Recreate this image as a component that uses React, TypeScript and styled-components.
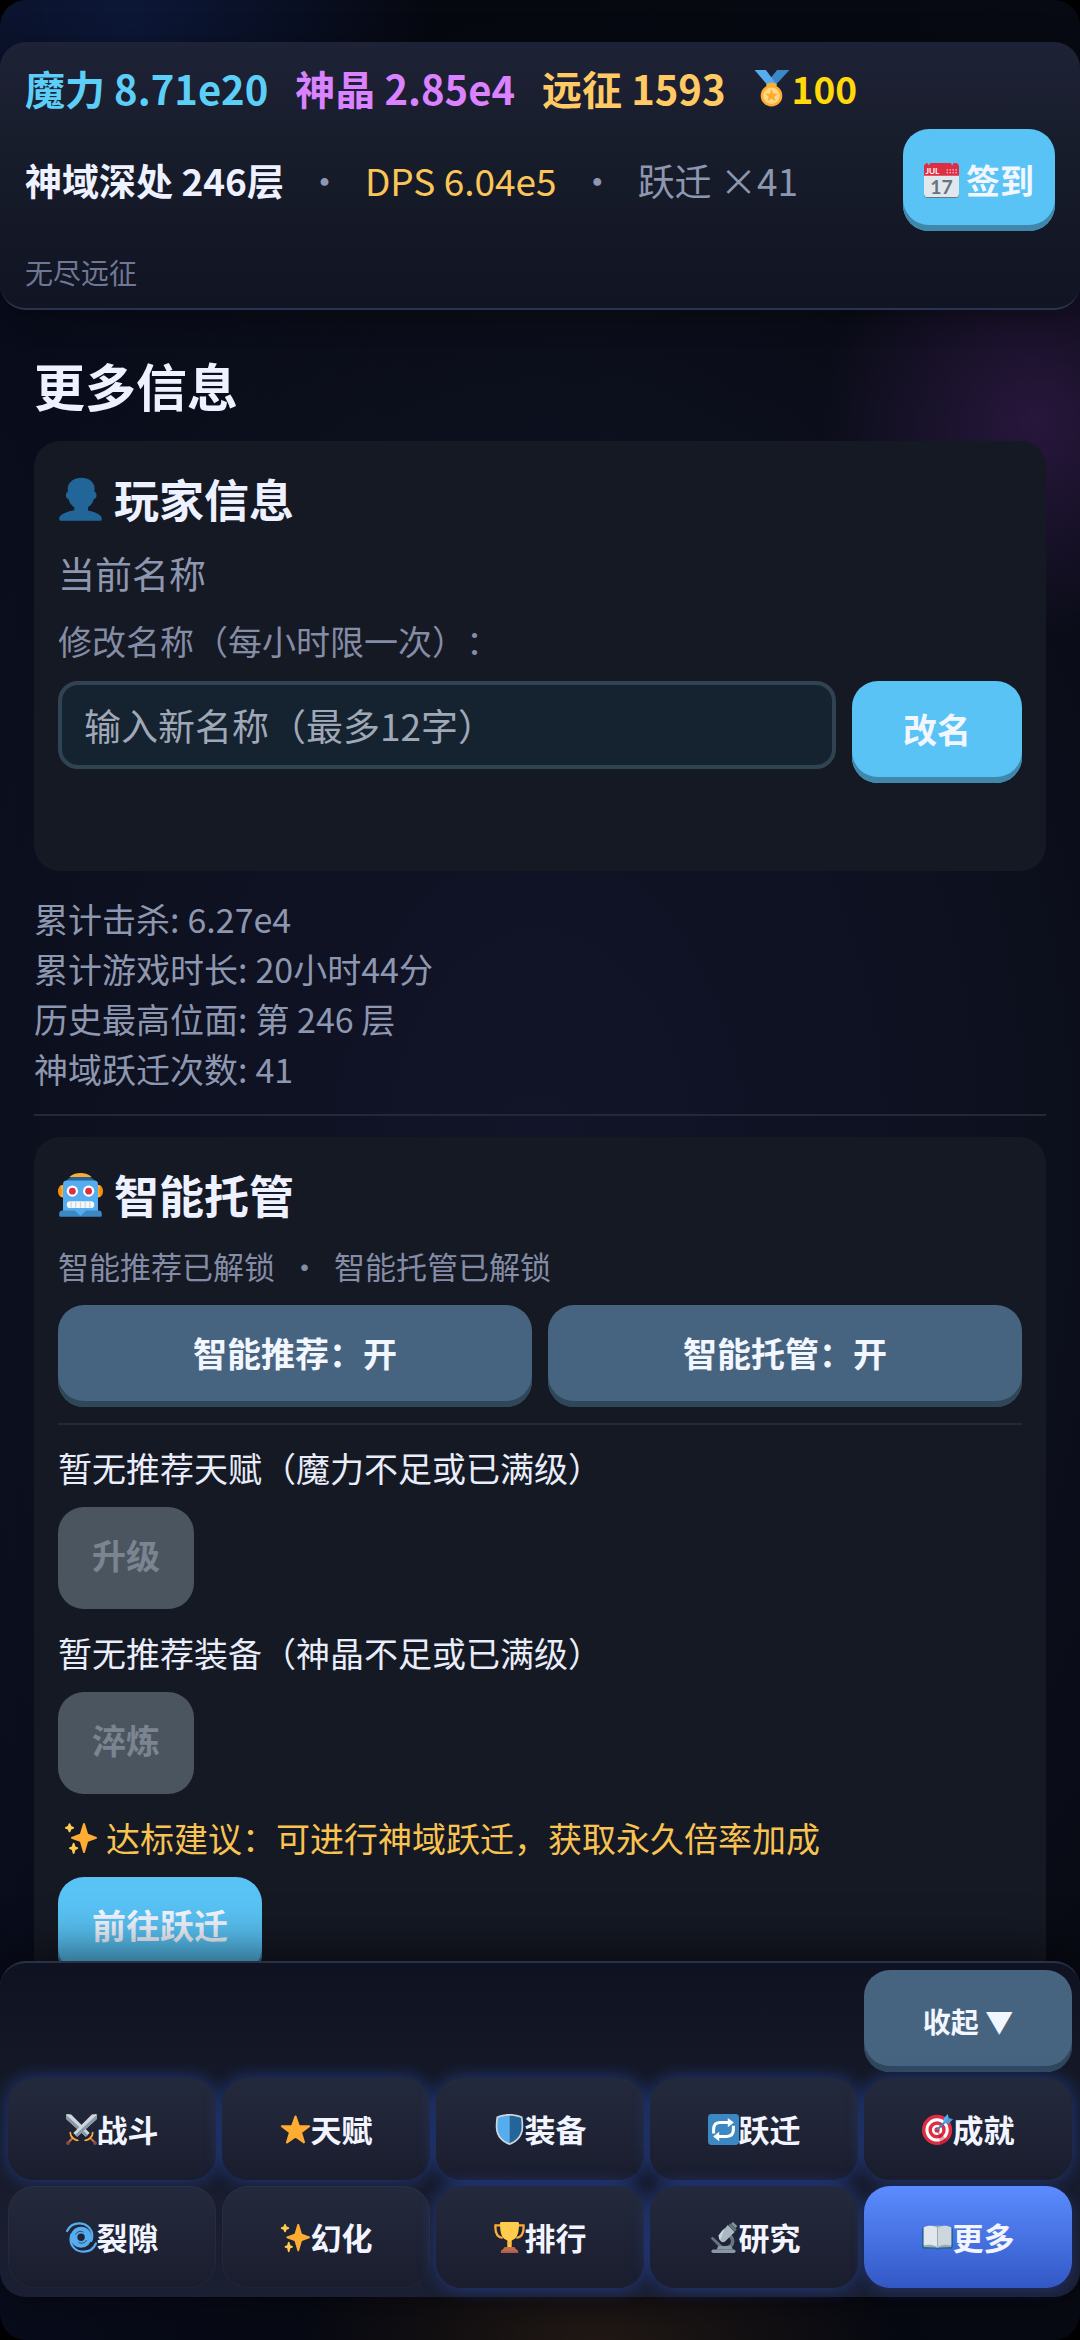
import React from "react";
import styled, { createGlobalStyle, css } from "styled-components";

const GlobalStyle = createGlobalStyle`
  * { box-sizing: border-box; }
  html { background: #000; }
  body {
    margin: 0;
    font-family: "Noto Sans CJK SC", "Noto Sans", sans-serif;
    text-spacing-trim: space-all;
    color: #eef1ff;
  }
  h1, h2, p, ul, dl, dd { margin: 0; padding: 0; }
  button, input { font-family: inherit; }
`;

/* ---------- icons ---------- */

const Svg = styled.svg<{ $size: number }>`
  width: ${(p) => p.$size}px;
  height: ${(p) => p.$size}px;
  flex: none;
  display: block;
`;

type IconProps = { size: number };

const Icon = ({ size, children }: IconProps & { children: React.ReactNode }) => (
  <Svg $size={size} viewBox="0 0 36 36" aria-hidden="true">
    {children}
  </Svg>
);

const MedalIcon = ({ size }: IconProps) => (
  <Icon size={size}>
    <path fill="#3B88C3" d="M23.5 0h12L22 14.6l-7.200-4z" />
    <path fill="#55ACEE" d="M1.500 0h11l11 14.600H14z" />
    <path fill="#FFAC33" d="M13 13.500q5-2 10 0v3H13z" />
    <circle cx="18" cy="25" r="10.500" fill="#FFAC33" />
    <circle cx="18" cy="25" r="8" fill="#FFD983" />
    <path
      fill="#FFAC33"
      d="M18 18.600l1.700 4.200 4.500.300-3.500 2.900 1.200 4.400-3.900-2.500-3.900 2.500 1.200-4.400-3.500-2.900 4.500-.300z"
    />
  </Icon>
);

const CalendarIcon = ({ size }: IconProps) => (
  <Icon size={size}>
    <path fill="#66757F" d="M0 31.500h36v.500a4 4 0 0 1-4 4H4a4 4 0 0 1-4-4z" />
    <path fill="#E1E8ED" d="M0 11h36v20a4 4 0 0 1-4 4H4a4 4 0 0 1-4-4z" />
    <path
      fill="#DD2E44"
      d="M0 13V4a4 4 0 0 1 3.500-4L5 2.500 6.500 0h21L29 2.500 30.500 0 32 0a4 4 0 0 1 4 4v9z"
    />
    <g fill="#F4ABBA">
      {[24, 27, 30, 33].map((x) =>
        [7, 9.8].map((y) => <circle key={`${x}-${y}`} cx={x} cy={y} r=".9" />)
      )}
    </g>
    <text x="1.500" y="11.300" fontSize="8.500" fontWeight="700" fill="#fff" fontFamily="Lato, sans-serif">
      JUL
    </text>
    <text x="18" y="31.500" fontSize="20" fontWeight="700" textAnchor="middle" fill="#66757F" fontFamily="Lato, sans-serif">
      17
    </text>
  </Icon>
);

const UserIcon = ({ size }: IconProps) => (
  <Icon size={size}>
    <path
      fill="#269"
      d="M24 26.799v-2.566c2-1.348 4.080-3.779 4.703-6.896.186.103.206.170.413.170.991 0 1.709-1.287 1.709-2.873 0-1.562-.823-2.827-1.794-2.865.187-.674.293-1.577.293-2.735C29.324 5.168 26 .527 18.541.527c-6.629 0-10.777 4.641-10.777 8.507 0 1.123.069 2.043.188 2.755-.911.137-1.629 1.352-1.629 2.845 0 1.587.804 2.873 1.796 2.873.206 0 .025-.067.209-.170C8.952 20.453 11 22.885 13 24.232v2.414c-5 .645-12 3.437-12 6.230v1.061C1 35 2.076 35 3.137 35h29.725C33.924 35 35 35 35 33.938v-1.061c0-2.615-6-5.225-11-6.078z"
    />
  </Icon>
);

const RobotIcon = ({ size }: IconProps) => (
  <Icon size={size}>
    <ellipse cx="3.500" cy="14.500" rx="3.500" ry="5" fill="#F4900C" />
    <ellipse cx="32.500" cy="14.500" rx="3.500" ry="5" fill="#F4900C" />
    <path fill="#FFAC33" d="M2 10q2 4.500 0 9l3 .500v-10zM34 10q-2 4.500 0 9l-3 .500v-10z" />
    <path fill="#269" d="M5 8C9 2.500 13 2 18 2s9 .500 13 6z" />
    <path fill="#FFAC33" d="M9 3.200C12 .400 15 0 18 0s6 .400 9 3.200z" />
    <path fill="#55ACEE" d="M4 9q0-3 3-3h22q3 0 3 3v23H4z" />
    <path fill="#3B88C3" d="M1 32.500Q1 30 3.500 30h29q2.500 0 2.500 2.500V34q0 1-1 1H2q-1 0-1-1z" />
    <path fill="#55ACEE" d="M13 29.500h10l-5 4.800z" />
    <circle cx="11.500" cy="14.500" r="4.500" fill="#fff" />
    <circle cx="24.500" cy="14.500" r="4.500" fill="#fff" />
    <circle cx="11.500" cy="14.500" r="2.700" fill="#DD2E44" />
    <circle cx="24.500" cy="14.500" r="2.700" fill="#DD2E44" />
    <rect x="7" y="22.500" width="22" height="5.500" rx="2.700" fill="#F5F8FA" />
    <path stroke="#CCD6DD" strokeWidth="1" d="M10.500 22.700v5M14.200 22.700v5M18 22.700v5M21.800 22.700v5M25.500 22.700v5" />
  </Icon>
);

const SparklesIcon = ({ size }: IconProps) => (
  <Icon size={size}>
    <path
      fill="#FFAC33"
      d="M34.347 16.893l-8.899-3.294-3.323-10.891c-.128-.420-.517-.708-.956-.708-.439 0-.828.288-.956.708l-3.322 10.891-8.900 3.294c-.393.146-.653.519-.653.938 0 .418.260.793.653.938l8.895 3.293 3.324 11.223c.126.424.516.715.959.715.442 0 .833-.291.959-.716l3.324-11.223 8.896-3.293c.391-.144.652-.518.652-.937 0-.418-.261-.792-.653-.938z"
    />
    <path
      fill="#FFCC4D"
      d="M14.347 27.894l-2.314-.856-.900-3.300c-.118-.436-.513-.738-.964-.738-.451 0-.846.302-.965.737l-.900 3.300-2.313.856c-.393.145-.653.520-.653.938 0 .418.260.793.653.938l2.301.853.907 3.622c.112.444.511.756.970.756.459 0 .858-.312.970-.757l.907-3.622 2.301-.853c.393-.144.653-.519.653-.937 0-.418-.260-.793-.653-.937zM10.009 6.231l-2.364-.875-.876-2.365c-.145-.393-.519-.653-.938-.653-.418 0-.792.260-.938.653l-.875 2.365-2.365.875c-.393.146-.653.520-.653.938 0 .418.260.793.653.938l2.365.875.875 2.365c.146.393.520.653.938.653.418 0 .792-.260.938-.653l.875-2.365 2.365-.875c.393-.146.653-.520.653-.938 0-.418-.260-.792-.653-.938z"
    />
  </Icon>
);

const SwordsIcon = ({ size }: IconProps) => {
  const sword = (
    <>
      <path fill="#CCD6DD" d="M0 1l1-1 5 .500L27.500 22 23 26.500.500 6z" />
      <path fill="#8899A6" d="M.500 6L0 1l25.500 23.300L23 26.500z" />
      <path fill="#BF6952" d="M26.500 28l1.800-1.800 6 6-1.800 1.800z" />
      <circle cx="33.700" cy="33.700" r="2.200" fill="#8A4B38" />
      <path
        fill="none"
        stroke="#FFAC33"
        strokeWidth="2"
        strokeLinecap="round"
        d="M31 21.500q.200 3.200-2.700 6.300-2.800 2.800-6 2.700"
      />
    </>
  );
  return (
    <Icon size={size}>
      {sword}
      <g transform="matrix(-1 0 0 1 36 0)">{sword}</g>
    </Icon>
  );
};

const StarIcon = ({ size }: IconProps) => (
  <Icon size={size}>
    <path
      fill="#FFAC33"
      stroke="#FFAC33"
      strokeWidth="2.500"
      strokeLinejoin="round"
      d="M18 3l3.900 11.200h11.900l-9.500 7.100 3.500 11.600L18 26l-9.800 6.900 3.500-11.600-9.500-7.100h11.900z"
    />
  </Icon>
);

const ShieldIcon = ({ size }: IconProps) => (
  <Icon size={size}>
    <path fill="#CCD6DD" d="M33 3s-7-3-15-3S3 3 3 3s-1 5-1 12c0 13 10 19 16 21 6-2 16-8 16-21 0-7-1-12-1-12z" />
    <path fill="#55ACEE" d="M18 33.900C12 31.500 4 26 4 15 4 9 4.700 4.500 4.700 4.500S11 2 18 2z" />
    <path fill="#269" d="M18 33.900C24 31.500 32 26 32 15c0-6-.700-10.500-.700-10.500S25 2 18 2z" />
  </Icon>
);

const RepeatIcon = ({ size }: IconProps) => (
  <Icon size={size}>
    <rect width="36" height="36" rx="4" fill="#3B88C3" />
    <path
      fill="none"
      stroke="#fff"
      strokeWidth="3.500"
      d="M6.500 22.500V18c0-5.500 3-8 8-8H24M29.500 13.500V18c0 5.500-3 8-8 8H12"
    />
    <path fill="#fff" d="M23 4.500l7 5.500-7 5.500zM13 31.500L6 26l7-5.500z" />
  </Icon>
);

const TargetIcon = ({ size }: IconProps) => (
  <Icon size={size}>
    <circle cx="17.500" cy="18.500" r="17.500" fill="#DD2E44" />
    <circle cx="17.500" cy="18.500" r="13.500" fill="#fff" />
    <circle cx="17.500" cy="18.500" r="10" fill="#DD2E44" />
    <circle cx="17.500" cy="18.500" r="6" fill="#fff" />
    <circle cx="17.500" cy="18.500" r="3" fill="#DD2E44" />
    <path fill="#A0041E" opacity=".35" d="M17.500 18.500l12 12a17 17 0 0 1-8 5z" />
    <path fill="none" stroke="#3B88C3" strokeWidth="2.200" strokeLinecap="round" d="M18 18L29 7" />
    <path fill="#55ACEE" d="M25 10.500V5l5-5 1 4.500 5 1.500-5 5z" />
    <path fill="#3B88C3" d="M25.500 10.500L31 4.500l5 1.500-5 5z" opacity=".5" />
  </Icon>
);

const CycloneIcon = ({ size }: IconProps) => (
  <Icon size={size}>
    <circle cx="17.500" cy="17.700" r="8.300" fill="none" stroke="#55ACEE" strokeWidth="8" />
    <path
      fill="none"
      stroke="#55ACEE"
      strokeWidth="2.600"
      strokeLinecap="round"
      d="M1.300 10.500C4 4.500 9.500 1.500 15.500 1.500 24 1.500 30.500 8 30.500 16c0 2-.500 4.500-1.200 6"
    />
    <path
      fill="none"
      stroke="#55ACEE"
      strokeWidth="2.600"
      strokeLinecap="round"
      d="M34.700 25C32 31.500 26.500 34.500 20.500 34.500 12 34.500 5.300 28.500 5.300 20c0-2.200.400-4 1-5.500"
    />
    <path
      fill="none"
      stroke="#1f2438"
      strokeWidth=".8"
      d="M11 14.500c2-3.500 6-4.600 9.500-2.600M24 21c-2 3.500-6 4.600-9.500 2.600"
    />
  </Icon>
);

const TrophyIcon = ({ size }: IconProps) => (
  <Icon size={size}>
    <path
      fill="none"
      stroke="#FFAC33"
      strokeWidth="2.700"
      d="M9 4H1.700c-.500 7 1 13.500 8.300 14.500M27 4h7.300c.500 7-1 13.500-8.300 14.500"
    />
    <path fill="#FFCC4D" d="M7 1.500Q7 0 8.500 0h19Q29 0 29 1.500C29 14 27 19 20.500 21.500V30h-5v-8.500C9 19 7 14 7 1.500z" />
    <path fill="#FFAC33" d="M15.500 23.500h5V26h-5z" />
    <path fill="#C1694F" d="M11 31q0-2 2-2h10q2 0 2 2l3 2.500V36H8v-2.500z" />
    <path fill="#8A4B38" opacity=".4" d="M8 34h20v2H8z" />
  </Icon>
);

const MicroscopeIcon = ({ size }: IconProps) => (
  <Icon size={size}>
    <path fill="#66757F" d="M3 19l2.500-2L17 28l-2.500 2.500z" />
    <path
      fill="none"
      stroke="#66757F"
      strokeWidth="4"
      d="M24 15c5.500 3 6 9.500 2 13-2 1.800-4.500 2-7.500 2"
    />
    <path fill="#8899A6" d="M12 28h15l2 4H10z" />
    <rect x="4" y="32" width="28" height="4" rx="2" fill="#8899A6" />
    <path fill="#AAB8C2" d="M23 3.500l8 8L19.500 23q-2.500 1.500-5-1t-2-6z" />
    <path fill="#CCD6DD" d="M16 10.500l-3.500 5q-.500 3 2 5.500l5-14z" />
    <path fill="#66757F" d="M24 4l2-2.500 7.500 7.500-2.500 2z" />
    <path fill="#8899A6" d="M27 2l2-2 5 5-2 2z" />
  </Icon>
);

const BookIcon = ({ size }: IconProps) => (
  <Icon size={size}>
    <path fill="#226699" d="M0 8q0-2 2-2h32q2 0 2 2v21q0 2-2 2H21q-3 2.500-6 0H2q-2 0-2-2z" />
    <path fill="#99AAB5" d="M2 6l15-2h2l15 2v23l-14 .500-2 1-2-1L2 29z" />
    <path fill="#E1E8ED" d="M2 27V6.500C6 3.500 13 3.500 17.500 6.500v22.500C13 26 6 26 2 27z" />
    <path fill="#CCD6DD" d="M34 27V6.500C30 3.500 23 3.500 18.500 6.500v22.500C23 26 30 26 34 27z" />
    <path stroke="#99AAB5" strokeWidth="1" d="M18 6.500v22.500" />
  </Icon>
);

/* ---------- shell ---------- */

const Screen = styled.div`
  display: flex;
  flex-direction: column;
  height: 100vh;
  padding: 42px 0 43px;
  border-radius: 26px;
  overflow: hidden;
  background:
    radial-gradient(circle 300px at 12% 20px, rgba(28, 60, 150, 0.25), transparent),
    radial-gradient(circle 215px at 96% 420px, rgba(110, 50, 150, 0.3), transparent),
    radial-gradient(ellipse 300px 120px at 55% 100%, rgba(110, 70, 30, 0.26), transparent),
    radial-gradient(ellipse 70% 50% at 50% 50%, #121429 0%, #0e1120 55%, transparent 100%),
    linear-gradient(90deg, #080c1b, #060810 40%, #080a13);
`;

const Header = styled.header`
  position: relative;
  display: flex;
  flex-direction: column;
  padding: 16px 25px 13px;
  border-bottom: 2px solid #2a3350;
  border-radius: 26px;
  background: linear-gradient(#1e2236, #171c2a 45%, #111422);
  box-shadow: 0 4px 30px rgba(0, 0, 0, 0.35);
`;

const Currencies = styled.div`
  display: flex;
  align-items: center;
  gap: 27px;
  height: 60px;
  margin-bottom: 11px;
`;

const Currency = styled.span<{ $color: string }>`
  color: ${(p) => p.$color};
  font-size: 40px;
  line-height: 60px;
  font-weight: 700;
`;

const Medals = styled.span`
  display: flex;
  align-items: center;
  gap: 2px;
  color: #ffd90a;
  font-size: 37px;
  line-height: 56px;
  font-weight: 700;
`;

const StatusRow = styled.div`
  display: flex;
  align-items: center;
  justify-content: space-between;
`;

const Status = styled.div`
  display: flex;
  gap: 22px;
  font-size: 37px;
  line-height: 56px;
  color: #8e97b0;
`;

const Place = styled.strong`
  color: #eef1ff;
`;

const Dps = styled.span`
  color: #fbc558;
`;

const Mode = styled.p`
  margin-top: 18px;
  font-size: 28px;
  line-height: 46px;
  color: #6f7795;
`;

/* ---------- buttons ---------- */

const tones = {
  primary: css`
    background: #59c3f5;
    box-shadow: inset 0 -6px 0 #3f88ac;
  `,
  steel: css`
    background: #46647f;
    box-shadow: inset 0 -6px 0 #2f4759;
  `,
};

const Button = styled.button<{ $tone?: keyof typeof tones }>`
  display: flex;
  align-items: center;
  justify-content: center;
  gap: 7px;
  min-height: 102px;
  padding: 0 34px 6px;
  border: 0;
  border-radius: 26px;
  color: #f2f6ff;
  font-size: 34px;
  line-height: 50px;
  font-weight: 700;
  white-space: nowrap;
  ${(p) => tones[p.$tone ?? "primary"]}

  &:disabled {
    background: #4b555f;
    box-shadow: none;
    color: #7b8591;
  }
`;

const SignInButton = styled(Button)`
  padding: 0 21px;
`;

const RenameButton = styled(Button)`
  padding: 0 51px 6px;
`;

const CollapseButton = styled(Button)`
  padding: 0;
  font-size: 28px;
`;

/* ---------- content ---------- */

const Main = styled.main`
  flex: 1;
  min-height: 0;
  overflow: hidden;
  padding: 40px 34px 0;
`;

const PageTitle = styled.h1`
  margin-bottom: 21px;
  font-size: 51px;
  line-height: 70px;
  font-weight: 700;
`;

const Card = styled.section`
  display: flex;
  flex-direction: column;
  gap: 12px;
  padding: 24px;
  border-radius: 26px;
  background: #151924;
`;

const CardTitle = styled.h2`
  display: flex;
  align-items: center;
  gap: 11px;
  font-size: 45px;
  line-height: 68px;
  font-weight: 700;
`;

const CurrentName = styled.p`
  font-size: 37px;
  line-height: 56px;
  color: #8e97b0;
`;

const FieldLabel = styled.label`
  font-size: 34px;
  line-height: 56px;
  color: #858ca6;
`;

const FieldRow = styled.div`
  display: flex;
  align-items: flex-start;
  gap: 16px;
`;

const NameInput = styled.input`
  flex: 1;
  min-width: 0;
  height: 88px;
  padding: 0 22px;
  border: 4px solid #304353;
  border-radius: 20px;
  background: #152330;
  color: #eef1ff;
  font-size: 37px;
  line-height: 56px;

  &::placeholder {
    color: #a0a8b8;
    opacity: 1;
  }
`;

const Message = styled.p`
  min-height: 52px;
`;

const Stats = styled.dl`
  margin: 23px 0 20px;
  font-size: 34px;
  line-height: 50px;
  color: #8e97b0;
`;

const Stat = styled.div`
  display: flex;
  gap: 8px;
`;

const Divider = styled.hr<{ $space: number }>`
  width: 100%;
  height: 2px;
  margin: 0 0 ${(p) => p.$space}px;
  border: 0;
  background: #242839;
`;

const Unlocks = styled.p`
  display: flex;
  gap: 14px;
  font-size: 31px;
  line-height: 50px;
  color: #858ca6;
`;

const Toggles = styled.div`
  display: grid;
  grid-template-columns: 1fr 1fr;
  gap: 16px;
  margin: 2px 0 4px;
`;

const Advice = styled.div`
  display: flex;
  flex-direction: column;
  align-items: flex-start;
  gap: 14px;
  margin-bottom: 7px;
`;

const AdviceText = styled.p<{ $gold?: boolean }>`
  display: flex;
  align-items: center;
  gap: 8px;
  padding-left: ${(p) => (p.$gold ? 6 : 0)}px;
  font-size: 34px;
  line-height: 50px;
  color: ${(p) => (p.$gold ? "#f9c352" : "#e9edfa")};
`;

/* ---------- bottom navigation ---------- */

const Nav = styled.nav`
  position: relative;
  display: grid;
  grid-template-columns: repeat(5, 1fr);
  gap: 6px;
  padding: 7px 8px 9px;
  border-top: 2px solid #2a3048;
  border-radius: 26px;
  background: linear-gradient(#0f1220, #151927 35%, #1b1f33);
  box-shadow: 0 -8px 50px rgba(0, 0, 0, 0.6);
`;

const CollapseSlot = styled.div`
  grid-column: 5;
  display: grid;
`;

const NavButton = styled.button<{ $glow: boolean; $active: boolean }>`
  display: flex;
  align-items: center;
  justify-content: center;
  min-height: 102px;
  padding: 0;
  border: 0;
  border-radius: 26px;
  background: ${(p) =>
    p.$active ? "linear-gradient(#5b8cff, #3358c6)" : "linear-gradient(#242a3d, #1a1d2e)"};
  box-shadow: ${(p) =>
    p.$glow
      ? "0 0 18px rgba(48, 98, 230, 0.45)"
      : p.$active
        ? "0 4px 14px rgba(48, 98, 230, 0.25)"
        : "inset 0 0 0 1px rgba(255, 255, 255, 0.03)"};
  color: #f2f5ff;
  font-size: 31px;
  line-height: 46px;
  font-weight: 700;
`;

const stats = [
  ["累计击杀", "6.27e4"],
  ["累计游戏时长", "20小时44分"],
  ["历史最高位面", "第 246 层"],
  ["神域跃迁次数", "41"],
];

const tabs = [
  { label: "战斗", icon: SwordsIcon, glow: true },
  { label: "天赋", icon: StarIcon, glow: true },
  { label: "装备", icon: ShieldIcon, glow: true },
  { label: "跃迁", icon: RepeatIcon, glow: true },
  { label: "成就", icon: TargetIcon, glow: true },
  { label: "裂隙", icon: CycloneIcon },
  { label: "幻化", icon: SparklesIcon },
  { label: "排行", icon: TrophyIcon, glow: true },
  { label: "研究", icon: MicroscopeIcon, glow: true },
  { label: "更多", icon: BookIcon, active: true },
];

export default function App() {
  return (
    <>
      <GlobalStyle />
      <Screen>
        <Header>
          <Currencies>
            <Currency $color="#5ccff8">魔力 8.71e20</Currency>
            <Currency $color="#da82ff">神晶 2.85e4</Currency>
            <Currency $color="#ffca63">远征 1593</Currency>
            <Medals>
              <MedalIcon size={37} />
              100
            </Medals>
          </Currencies>
          <StatusRow>
            <Status>
              <Place>神域深处 246层</Place>
              <span>・</span>
              <Dps>DPS 6.04e5</Dps>
              <span>・</span>
              <span>跃迁 ×41</span>
            </Status>
            <SignInButton type="button">
              <CalendarIcon size={35} />
              签到
            </SignInButton>
          </StatusRow>
          <Mode>无尽远征</Mode>
        </Header>

        <Main>
          <PageTitle>更多信息</PageTitle>
          <Card>
            <CardTitle>
              <UserIcon size={45} />
              玩家信息
            </CardTitle>
            <CurrentName>当前名称</CurrentName>
            <FieldLabel htmlFor="new-name">修改名称（每小时限一次）：</FieldLabel>
            <FieldRow>
              <NameInput id="new-name" type="text" maxLength={12} placeholder="输入新名称（最多12字）" />
              <RenameButton type="button">改名</RenameButton>
            </FieldRow>
            <Message role="status" />
          </Card>

          <Stats>
            {stats.map(([name, value]) => (
              <Stat key={name}>
                <dt>{name}:</dt>
                <dd>{value}</dd>
              </Stat>
            ))}
          </Stats>
          <Divider $space={21} />

          <Card>
            <CardTitle>
              <RobotIcon size={45} />
              智能托管
            </CardTitle>
            <Unlocks>
              <span>智能推荐已解锁</span>
              <span>・</span>
              <span>智能托管已解锁</span>
            </Unlocks>
            <Toggles>
              <Button type="button" $tone="steel">智能推荐：开</Button>
              <Button type="button" $tone="steel">智能托管：开</Button>
            </Toggles>
            <Divider $space={6} />
            <Advice>
              <AdviceText>暂无推荐天赋（魔力不足或已满级）</AdviceText>
              <Button type="button" disabled>升级</Button>
            </Advice>
            <Advice>
              <AdviceText>暂无推荐装备（神晶不足或已满级）</AdviceText>
              <Button type="button" disabled>淬炼</Button>
            </Advice>
            <Advice>
              <AdviceText $gold>
                <SparklesIcon size={34} />
                达标建议：可进行神域跃迁，获取永久倍率加成
              </AdviceText>
              <Button type="button">前往跃迁</Button>
            </Advice>
          </Card>
        </Main>

        <Nav>
          <CollapseSlot>
            <CollapseButton type="button" $tone="steel">收起 ▼</CollapseButton>
          </CollapseSlot>
          {tabs.map(({ label, icon: TabIcon, glow, active }) => (
            <NavButton
              key={label}
              type="button"
              $glow={Boolean(glow)}
              $active={Boolean(active)}
              aria-current={active ? "page" : undefined}
            >
              <TabIcon size={31} />
              {label}
            </NavButton>
          ))}
        </Nav>
      </Screen>
    </>
  );
}
